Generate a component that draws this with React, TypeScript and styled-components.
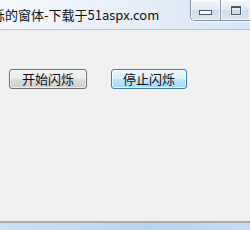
import React from "react";
import styled, { createGlobalStyle } from "styled-components";

const GlobalStyle = createGlobalStyle`
  html, body {
    margin: 0;
    padding: 0;
    width: 250px;
    height: 230px;
    overflow: hidden;
    background: #f0f0f0;
  }
  #root {
    height: 100%;
  }
`;

const Window = styled.div`
  width: 250px;
  height: 230px;
  display: flex;
  flex-direction: column;
  font-family: "Noto Sans CJK SC", "Liberation Sans", sans-serif;
`;

const TitleBar = styled.div`
  height: 29px;
  flex: none;
  display: flex;
  align-items: flex-start;
  overflow: hidden;
  background: linear-gradient(90deg, #f4f8fc 0%, #e6eef8 55%, #d6e5f5 100%);
  border-bottom: 1px solid #b9c4cf;
`;

const Title = styled.div`
  flex: 1;
  min-width: 0;
  margin: 6px 0 0 -8px;
  font-size: 13px;
  line-height: 18px;
  color: #111;
  white-space: nowrap;
`;

const Caption = styled.div`
  display: flex;
  flex: none;
  width: 59px;
  height: 20px;
  border: 1px solid #7f8c9b;
  border-top: none;
  border-right: none;
  border-bottom-left-radius: 5px;
  overflow: hidden;
  box-shadow: 0 1px 0 rgba(255, 255, 255, 0.8);
`;

const CaptionButton = styled.div<{ $last?: boolean }>`
  flex: 1;
  display: flex;
  align-items: center;
  justify-content: center;
  background: linear-gradient(180deg, #f4f7fa 0%, #e2e9f1 50%, #cfdbe8 51%, #dce6f0 100%);
  border-left: ${p => (p.$last ? "1px solid #8693a2" : "none")};
  box-shadow: inset 0 0 0 1px rgba(255, 255, 255, 0.6);
`;

const MinGlyph = styled.div`
  width: 11px;
  height: 3px;
  margin-top: 5px;
  background: #f4f6f8;
  border: 1px solid #4c5968;
`;

const MaxGlyph = styled.div`
  width: 8px;
  height: 6px;
  border: 1px solid #4c5968;
  border-top-width: 2px;
  outline: 1px solid #f4f6f8;
`;

const Client = styled.div`
  flex: 1;
  background: #f0f0f0;
  display: flex;
  align-items: flex-start;
  gap: 24px;
  padding: 39px 0 0 9px;
`;

const Button = styled.button<{ $focused?: boolean }>`
  width: ${p => (p.$focused ? 76 : 78)}px;
  height: 20px;
  padding: 0;
  margin: 0;
  font-family: "Noto Sans CJK SC", "Liberation Sans", sans-serif;
  font-size: 13px;
  line-height: 18px;
  color: #0e0e0e;
  border-radius: 3px;
  border: 1px solid ${p => (p.$focused ? "#3c7fb1" : "#707070")};
  background: ${p =>
    p.$focused
      ? "linear-gradient(180deg, #eaf6fd 0%, #d9f0fc 50%, #bee6fd 51%, #a7d9f5 100%)"
      : "linear-gradient(180deg, #f2f2f2 0%, #ebebeb 50%, #dddddd 51%, #cfcfcf 100%)"};
  box-shadow: inset 0 0 0 1px ${p => (p.$focused ? "rgba(255,255,255,0.7)" : "rgba(255,255,255,0.6)")};
`;

const BottomEdge = styled.div`
  height: 7px;
  flex: none;
  border-top: 2px solid #a3acb5;
  background: linear-gradient(90deg, #cfe0f2 0%, #c2d8ef 40%, #b9d2ec 60%, #c8dcf1 100%);
`;

export default function App() {
  return (
    <>
      <GlobalStyle />
      <Window>
        <TitleBar>
          <Title>烁的窗体-下载于51aspx.com</Title>
          <Caption>
            <CaptionButton>
              <MinGlyph />
            </CaptionButton>
            <CaptionButton $last>
              <MaxGlyph />
            </CaptionButton>
          </Caption>
        </TitleBar>
        <Client>
          <Button>开始闪烁</Button>
          <Button $focused>停止闪烁</Button>
        </Client>
        <BottomEdge />
      </Window>
    </>
  );
}
